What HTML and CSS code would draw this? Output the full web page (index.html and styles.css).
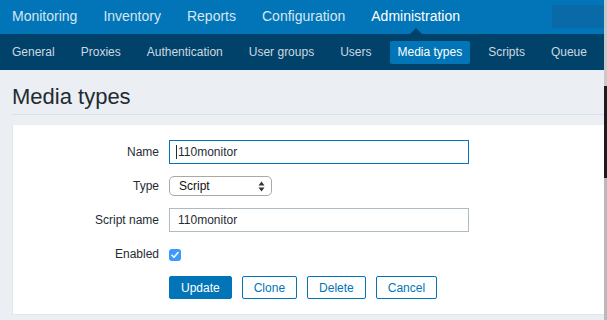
FILE: index.html
```html
<!DOCTYPE html>
<html lang="en">
<head>
    <meta charset="UTF-8">
    <meta name="viewport" content="width=device-width, initial-scale=1.0">
    <title>Media types</title>
    <link rel="stylesheet" href="styles.css">
</head>
<body>
    <div class="page">
        <!-- main menu -->
        <div class="top_nav">
            <ul class="menu">
                <li>Monitoring</li>
                <li>Inventory</li>
                <li>Reports</li>
                <li>Configuration</li>
                <li class="selected">Administration</li>
            </ul>
            <div class="search"></div>
        </div>

        <!-- sub menu -->
        <ul class="sub_nav">
            <li>General</li>
            <li>Proxies</li>
            <li>Authentication</li>
            <li>User groups</li>
            <li>Users</li>
            <li class="selected">Media types</li>
            <li>Scripts</li>
            <li>Queue</li>
        </ul>

        <div class="header">
            <h1>Media types</h1>
        </div>

        <div class="form_card">
            <div class="row">
                <label>Name</label>
                <div class="input focused"><span class="caret"></span>110monitor</div>
            </div>
            <div class="row">
                <label>Type</label>
                <div class="select">
                    <span>Script</span>
                    <svg width="7" height="11" viewBox="0 0 7 11">
                        <path d="M3.5 0.5 L6.5 4.5 L0.5 4.5 Z" fill="#333"/>
                        <path d="M3.5 10.5 L6.5 6.5 L0.5 6.5 Z" fill="#333"/>
                    </svg>
                </div>
            </div>
            <div class="row">
                <label>Script name</label>
                <div class="input">110monitor</div>
            </div>
            <div class="row">
                <label>Enabled</label>
                <span class="checkbox">
                    <svg width="12" height="12" viewBox="0 0 12 12">
                        <path d="M3 6.3 L5 8.3 L9 3.6" fill="none" stroke="#fff" stroke-width="1.6" stroke-linecap="round" stroke-linejoin="round"/>
                    </svg>
                </span>
            </div>
            <div class="row buttons">
                <label></label>
                <button class="btn primary">Update</button>
                <button class="btn">Clone</button>
                <button class="btn">Delete</button>
                <button class="btn">Cancel</button>
            </div>
        </div>
    </div>
    <div class="edge"></div>
</body>
</html>
```

FILE: styles.css
```css
*{
    padding: 0;
    margin: 0;
    box-sizing: border-box;
}

body{
    display: flex;
    height: 320px;
    overflow: hidden;
    background-color: #ebeef2;
    font-family: "Liberation Sans", Arial, sans-serif;
    color: #1f2c33;
}

.page{
    flex: 1;
    min-width: 0;
}

.edge{
    width: 3px;
    background: linear-gradient(to bottom, #c9c9c9 0, #c9c9c9 86px, #1c1c1c 86px, #1c1c1c 178px, #b9b9b9 178px);
}

ul{
    list-style: none;
}

/* top menu */
.top_nav{
    display: flex;
    align-items: flex-start;
    height: 34px;
    background-color: #0275b8;
    padding-left: 12px;
}

.menu{
    display: flex;
    gap: 26px;
}

.menu li{
    position: relative;
    font-size: 14px;
    line-height: 33px;
    color: #d6e6f1;
}

.menu li.selected{
    color: #fff;
}

.menu li.selected::after{
    content: "";
    position: absolute;
    left: 50%;
    bottom: -1px;
    margin-left: -6px;
    border: 6px solid transparent;
    border-bottom-color: #01426a;
    border-top: none;
}

.search{
    margin-left: auto;
    margin-top: 5px;
    width: 52px;
    height: 23px;
    background-color: #0a69a7;
}

/* sub menu */
.sub_nav{
    display: flex;
    align-items: center;
    gap: 10px;
    height: 36px;
    padding-left: 4px;
    background-color: #01426a;
}

.sub_nav li{
    font-size: 12px;
    line-height: 23px;
    padding: 0 8px;
    color: #cdd8e0;
    border-radius: 2px;
}

.sub_nav li.selected{
    background-color: #0275b8;
    color: #fff;
}

/* page title */
.header{
    margin-left: 12px;
    padding: 14px 0 4px;
    border-bottom: 1px solid #dce1e5;
}

.header h1{
    font-size: 22px;
    font-weight: normal;
    line-height: 26px;
    color: #1f2c33;
}

/* form */
.form_card{
    margin: 10px 0 0 12px;
    padding: 15px 0 15px;
    background-color: #fff;
    border: 1px solid #e1e6ea;
    border-top: none;
    border-right: none;
}

.row{
    display: flex;
    align-items: center;
    gap: 10px;
    height: 24px;
    margin-bottom: 10px;
}

.row:last-child{
    margin-bottom: 0;
    height: 23px;
}

.row label{
    width: 146px;
    text-align: right;
    font-size: 12px;
    color: #1f2c33;
}

.input{
    display: flex;
    align-items: center;
    width: 300px;
    height: 24px;
    padding: 0 8px;
    border: 1px solid #acbbc4;
    font-size: 12px;
    color: #1f2c33;
}

.input.focused{
    border: 1.5px solid #0275b8;
    padding-left: 6px;
}

.caret{
    width: 1px;
    height: 14px;
    margin-right: 1px;
    background-color: #1f2c33;
}

.select{
    display: flex;
    align-items: center;
    justify-content: space-between;
    width: 103px;
    height: 20px;
    padding: 0 6px 0 9px;
    border: 1px solid #a9a9a9;
    border-radius: 5px;
    font-size: 12px;
    color: #111;
}

.checkbox{
    display: flex;
    width: 12px;
    height: 12px;
    margin-top: 1px;
    border-radius: 3px;
    background-color: #3b99fc;
}

.buttons{
    gap: 10px;
}

.btn{
    height: 23px;
    padding: 0 11px;
    border: 1px solid #0275b8;
    border-radius: 2px;
    background-color: #fff;
    color: #0275b8;
    font-family: inherit;
    font-size: 12px;
}

.btn.primary{
    background-color: #0275b8;
    color: #fff;
}
```
